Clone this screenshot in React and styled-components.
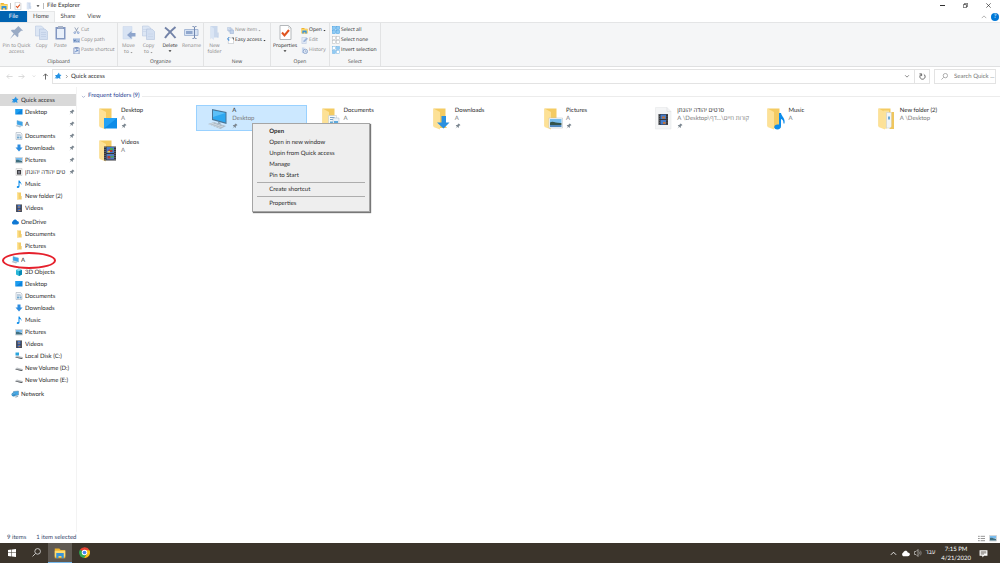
import React from 'react';
import styled, { createGlobalStyle, css } from 'styled-components';

const GlobalStyle = createGlobalStyle`
  * {
    box-sizing: border-box;
  }
  body {
    margin: 0;
    background-color: #fff;
    color: #2b2b2b;
    font-family: Lato, "Open Sans", "Noto Sans", "Liberation Sans", sans-serif;
    font-size: 6px;
    line-height: 8px;
    text-rendering: geometricPrecision;
  }
  button, input {
    margin: 0;
    padding: 0;
    border: 0;
    background: none;
    color: inherit;
    font: inherit;
    text-rendering: inherit;
  }
  a {
    color: inherit;
    text-decoration: none;
  }
  ul {
    margin: 0;
    padding: 0;
    list-style: none;
  }
  svg {
    display: block;
    flex: none;
  }
`;

const Window = styled.div`
  display: flex;
  flex-direction: column;
  min-height: 100vh;
`;

/* ---------- title bar and tabs ---------- */

const TitleBar = styled.header`
  display: flex;
  align-items: center;
  height: 11px;
`;

const QuickTools = styled.div`
  display: flex;
  align-items: center;
  gap: 2px;
`;

const Splitter = styled.span`
  width: 1px;
  height: 6px;
  background-color: #bbb;
`;

const Title = styled.h1`
  margin: 0 0 0 3px;
  padding-top: 1px;
  font-size: 6px;
  font-weight: 400;
  line-height: 8px;
`;

const WindowButtons = styled.div`
  display: flex;
  margin-left: auto;
`;

const WindowButton = styled.button`
  display: flex;
  align-items: center;
  justify-content: center;
  width: 23px;
  height: 11px;
`;

const Tabs = styled.nav`
  display: flex;
  align-items: stretch;
  height: 11px;
`;

const Tab = styled.button`
  width: 26px;
  padding-top: 1px;
  color: #444;

  ${(props) => props.$kind === 'file' && css`
    width: 27px;
    background-color: #0063b1;
    color: #fff;
  `}
  ${(props) => props.$kind === 'active' && css`
    width: 28px;
    padding-top: 0;
    border: 1px solid #e6e7e8;
    border-bottom: 0;
    background-color: #f5f6f7;
  `}
`;

const TabTools = styled.div`
  display: flex;
  align-items: center;
  gap: 4px;
  margin-left: auto;
  padding-right: 1px;
`;

const Help = styled.button`
  width: 8px;
  height: 8px;
  border-radius: 50%;
  background-color: #0078d7;
  color: #fff;
`;

/* ---------- ribbon ---------- */

const Ribbon = styled.section`
  display: flex;
  height: 45px;
  border-top: 1px solid #e4e5e6;
  border-bottom: 1px solid #dfe0e1;
  background-color: #f5f6f7;
  font-family: "Open Sans", "Noto Sans", sans-serif;
  font-size: 5px;
`;

const Group = styled.div`
  display: flex;
  flex-direction: column;
  justify-content: space-between;
  width: ${(props) => props.$width}px;
  padding-top: 2px;
  border-right: 1px solid #e2e3e4;
`;

const GroupBody = styled.div`
  display: flex;
  align-items: flex-start;
`;

const GroupName = styled.div`
  color: #444;
  line-height: 7px;
  text-align: center;
`;

const BigButton = styled.button`
  display: flex;
  flex: none;
  flex-direction: column;
  align-items: center;
  gap: 3px;
  width: ${(props) => props.$width}px;
  color: ${(props) => (props.$on ? '#222' : '#858585')};
  line-height: 6px;
  white-space: nowrap;
`;

const ButtonName = styled.span`
  display: flex;
  flex-direction: column;
  align-items: center;
`;

const WithCaret = styled.span`
  display: flex;
  align-items: center;
  gap: 1px;
`;

const SmallButtons = styled.div`
  display: flex;
  flex-direction: column;
  margin-left: 2px;
`;

const SmallButton = styled.button`
  display: flex;
  align-items: center;
  gap: 1px;
  height: 10px;
  color: ${(props) => (props.$on ? '#222' : '#858585')};
  white-space: nowrap;
`;

/* ---------- address row ---------- */

const AddressRow = styled.div`
  display: flex;
  align-items: center;
  height: 20px;
  padding: 0 4px 2px 0;
`;

const Arrows = styled.div`
  display: flex;
  align-items: center;
  justify-content: space-between;
  width: 52px;
  padding: 0 3px 0 6px;
`;

const IconButton = styled.button`
  display: flex;
  align-items: center;
  justify-content: center;
  min-width: ${(props) => props.$width || 6}px;
`;

const AddressBox = styled.div`
  display: flex;
  flex: 1;
  align-items: center;
  gap: 2px;
  height: 15px;
  padding-left: 1px;
  border: 1px solid #e3e3e3;
`;

const AddressName = styled.span`
  padding-top: 1px;
`;

const AddressEnd = styled.div`
  display: flex;
  align-self: stretch;
  margin-left: auto;
`;

const Refresh = styled(IconButton)`
  border-left: 1px solid #e3e3e3;
`;

const SearchBox = styled.label`
  display: flex;
  align-items: center;
  gap: 6px;
  width: 62px;
  height: 15px;
  margin-left: 4px;
  padding-left: 6px;
  border: 1px solid #e3e3e3;
`;

const SearchInput = styled.input`
  flex: 1;
  min-width: 0;
  padding-top: 1px;
  outline: none;

  &::placeholder {
    color: #777;
    opacity: 1;
  }
`;

/* ---------- body ---------- */

const Body = styled.div`
  display: flex;
  flex: 1;
`;

const Sidebar = styled.nav`
  display: flex;
  flex-direction: column;
  gap: 2px;
  width: 77px;
  padding-top: 7px;
  border-right: 1px solid #f3f3f3;
`;

const NavRow = styled.a`
  position: relative;
  display: flex;
  align-items: center;
  gap: 2px;
  height: 12px;
  padding: 0 1px 0 ${(props) => (props.$root ? 11 : 15)}px;
  background-color: ${(props) => (props.$selected ? '#d9d9d9' : 'transparent')};
`;

const NavName = styled.span`
  flex: 1;
  min-width: 0;
  padding-top: 1px;
  overflow: hidden;
  white-space: nowrap;
`;

const RedCircle = styled.span`
  position: absolute;
  top: -2px;
  left: 2px;
  width: 54px;
  height: 17px;
  border: 2px solid #e5202c;
  border-radius: 50%;
  z-index: 1;
`;

const Main = styled.main`
  flex: 1;
  min-width: 0;
  padding: 4px 0 0 4px;
`;

const SectionTitle = styled.h2`
  display: flex;
  align-items: center;
  gap: 2px;
  margin: 0;
  padding-top: 1px;
  color: #2a3f93;
  font-size: 6px;
  font-weight: 400;
  line-height: 8px;

  &::after {
    content: '';
    flex: 1;
    height: 1px;
    background-color: #ececec;
  }
`;

const Tiles = styled.ul`
  display: grid;
  grid-template-columns: repeat(8, 1fr);
  gap: 6px 1px;
  padding: 5px 26px 0 4px;
`;

const Tile = styled.li`
  position: relative;
  display: flex;
  gap: 2px;
  height: 26px;
  padding-left: 11px;
  border: 1px solid ${(props) => (props.$selected ? '#99d1ff' : 'transparent')};
  background-color: ${(props) => (props.$selected ? '#cce8ff' : 'transparent')};
`;

const TileText = styled.div`
  display: flex;
  flex-direction: column;
  min-width: 0;
  padding-top: 1px;
  white-space: nowrap;
`;

const TilePath = styled.span`
  color: #7b7b7b;
`;

const Menu = styled.div`
  position: absolute;
  top: 17px;
  left: 55px;
  display: flex;
  flex-direction: column;
  width: 118px;
  padding: 2px 1px;
  border: 1px solid #a5a5a5;
  background-color: #eee;
  box-shadow: 1px 1px 1px #777;
  z-index: 2;
`;

const MenuItem = styled.button`
  height: 11px;
  padding-left: 15px;
  font-weight: ${(props) => (props.$bold ? 700 : 400)};
  text-align: left;
`;

const MenuLine = styled.hr`
  width: 108px;
  height: 1px;
  margin: 1px auto;
  border: 0;
  background-color: #adadad;
`;

/* ---------- status bar and taskbar ---------- */

const StatusBar = styled.footer`
  display: flex;
  align-items: center;
  gap: 10px;
  height: 11px;
  padding: 1px 3px 0 7px;
  color: #34476b;
`;

const Views = styled.div`
  display: flex;
  gap: 4px;
  margin-left: auto;
`;

const Taskbar = styled.footer`
  display: flex;
  align-items: stretch;
  height: 20px;
  background-color: #3b342b;
  color: #fff;
`;

const TaskButton = styled.button`
  display: flex;
  align-items: center;
  justify-content: center;
  width: 24px;
  border-bottom: 1px solid ${(props) => (props.$active ? '#76b9ed' : 'transparent')};
  background-color: ${(props) => (props.$active ? '#605a53' : 'transparent')};
`;

const Tray = styled.div`
  display: flex;
  align-items: center;
  gap: 4px;
  margin-left: auto;
  padding-right: 12px;
`;

const Clock = styled.time`
  margin: 0 4px 0 2px;
  padding-top: 1px;
  line-height: 9px;
  text-align: center;
`;

/* ---------- icons ---------- */

const Svg = ({ w = 8, h, box = '0 0 16 16', children }) => (
  <svg width={w} height={h || w} viewBox={box} fill="none" aria-hidden="true">{children}</svg>
);

const Chevron = ({ dir = 'down', color = '#666', w = 6 }) => {
  const paths = {
    down: 'M3 6l5 5 5-5',
    up: 'M2 11l6-6 6 6',
    right: 'M6 3l5 5-5 5',
  };
  return <Svg w={w}><path d={paths[dir]} stroke={color} strokeWidth="2" /></Svg>;
};

const Caret = ({ color = '#333', w = 4 }) => (
  <Svg w={w}><path d="M2 5h12l-6 7z" fill={color} /></Svg>
);

const Arrow = ({ dir, color }) => {
  const paths = {
    left: 'M15 8H2M7 3L2 8l5 5',
    right: 'M1 8h13M9 3l5 5-5 5',
    up: 'M8 15V2M3 7l5-5 5 5',
  };
  return <Svg w={7}><path d={paths[dir]} stroke={color} strokeWidth="2" /></Svg>;
};

const Pin = ({ w = 6, color = '#7c8791' }) => (
  <Svg w={w}>
    <path d="M10 1l5 5-2 0-3 3 0 3-1 1-3-3-5 5 4-6-3-3 1-1h3l3-3z" fill={color} />
  </Svg>
);

// the filled pin that marks Quick access
const Star = ({ w = 8 }) => (
  <Svg w={w}>
    <path d="M10 1l1 4 4 1-3 3 1 5-4-2-4 2 0-3-4 3 3-5-2-3 4 0z" fill="#2492e4" />
  </Svg>
);

const PagePair = ({ w = 15, arrow }) => (
  <Svg w={w} box="0 0 30 30">
    <path d="M3 2h12l4 4v16H3z" fill="#dce6f4" stroke="#b1c0dc" />
    <path d="M11 8h11l5 5v16H11z" fill="#d3dff1" stroke="#a9bad9" />
    {arrow
      ? <path d="M4 9h10M4 13h6M14 18h10M14 23h10" stroke="#c0cee5" />
      : <path d="M14 15h10M14 19h10M14 23h10" stroke="#b4c4df" />}
  </Svg>
);

const PasteIcon = () => (
  <Svg w={15} box="0 0 30 30">
    <path d="M5 4h20v25H5z" fill="#8297c1" />
    <path d="M8 8h14v18H8z" fill="#e9f0fa" />
    <path d="M10 2h10v5H10z" fill="#a8b3c8" />
  </Svg>
);

const CutIcon = () => (
  <Svg w={7}>
    <path d="M4 1l6 10M12 1L6 11" stroke="#8d9bb4" strokeWidth="2" />
    <circle cx="4" cy="13" r="2" stroke="#7f9ccb" strokeWidth="2" />
    <circle cx="12" cy="13" r="2" stroke="#7f9ccb" strokeWidth="2" />
  </Svg>
);

const CopyPathIcon = () => (
  <Svg w={7}>
    <path d="M0 3h16v10H0z" fill="#a9bfdf" />
    <path d="M2 6l2 4 2-4M8 10h1M11 10h2" stroke="#4d6fa8" strokeWidth="2" />
  </Svg>
);

const PasteShortcutIcon = () => (
  <Svg w={7}>
    <path d="M2 2h12v14H2z" fill="#e7eef8" stroke="#8297c1" strokeWidth="2" />
    <path d="M5 0h6v4H5z" fill="#8297c1" />
    <path d="M5 12c0-3 2-4 6-4M8 5l3 3-3 3" stroke="#5b80bd" strokeWidth="2" />
  </Svg>
);

const MoveIcon = () => (
  <Svg w={15} box="0 0 30 30">
    <path d="M4 3h18v25H4z" fill="#d8e3f3" stroke="#c6d4e9" />
    <path d="M29 16v7h-8v5l-9-8 9-8v4z" fill="#8ea5cc" />
  </Svg>
);

const DeleteIcon = () => (
  <Svg w={15} box="0 0 30 30">
    <path d="M4 5c7 5 14 12 21 21M25 4C18 10 10 17 4 26" stroke="#7383a8" strokeWidth="4" />
  </Svg>
);

const RenameIcon = () => (
  <Svg w={15} box="0 0 30 30">
    <path d="M1 9h27v12H1z" fill="#d7e3f4" stroke="#a8bad7" strokeWidth="2" />
    <path d="M4 12h13v6H4z" fill="#90a7cd" />
    <path d="M17 3c3 0 4 0 4 3v18c0 3-1 3-4 3M25 3c-3 0-4 0-4 3M21 24c0 3 1 3 4 3" stroke="#7187b0" strokeWidth="2" />
  </Svg>
);

const NewFolderIcon = ({ w = 15 }) => (
  <Svg w={w} box="0 0 30 30">
    <path d="M7 2h14v20l2 3H9l-2 4z" fill="#cad8ec" />
    <path d="M7 2l7 5v23l-7-5z" fill="#dae5f4" />
    <path d="M21 15h2v10h-2z" fill="#b8cae5" />
  </Svg>
);

const NewItemIcon = () => (
  <Svg w={7}>
    <path d="M1 1h8v7H1zM4 4h8v7H4z" fill="#dce6f4" stroke="#9fb3d4" />
    <path d="M7 7h8v8H7z" fill="#c2d2ea" stroke="#8aa3cc" />
  </Svg>
);

const EasyAccessIcon = () => (
  <Svg w={7}>
    <path d="M5 2h10v13H3V8" fill="#fff" stroke="#a2a8ae" />
    <path d="M5 0L1 5h3v4" stroke="#2d7ed0" strokeWidth="2" />
    <path d="M12 2h3v4" stroke="#555" strokeWidth="2" />
  </Svg>
);

const CheckPage = ({ w = 15 }) => (
  <Svg w={w} box="0 0 30 30">
    <path d="M4 1h17l5 5v23H4z" fill="#fff" stroke="#b4b8bb" strokeWidth="2" />
    <path d="M21 1v5h5" stroke="#b4b8bb" />
    <path d="M8 15l5 6 9-11" stroke="#e0541f" strokeWidth="4" />
  </Svg>
);

const ExplorerIcon = ({ w = 8 }) => (
  <Svg w={w}>
    <path d="M1 2h6l2 2h6v11H1z" fill="#f0b42f" />
    <path d="M1 5h14v8H1z" fill="#ffdc70" />
    <path d="M3 8h10v7h-3v-3H6v3H3z" fill="#3a94d8" />
  </Svg>
);

const EditIcon = () => (
  <Svg w={7}>
    <path d="M2 1h10v14H2z" fill="#e3ebf7" stroke="#a9bad9" />
    <path d="M5 12l1-4 7-7 3 3-7 7z" fill="#9db4da" />
  </Svg>
);

const HistoryIcon = () => (
  <Svg w={7}>
    <path d="M2 1h6v13H2z" fill="#c8d7ed" />
    <circle cx="10" cy="10" r="5" fill="#e3ebf7" stroke="#8aa3cc" strokeWidth="2" />
    <path d="M10 7v4h3" stroke="#6e89b8" />
  </Svg>
);

const Squares = ({ fills, stroke }) => (
  <Svg w={8}>
    <rect x="1" y="1" width="6" height="6" fill={fills[0]} stroke={stroke} />
    <rect x="9" y="1" width="6" height="6" fill={fills[1]} stroke={stroke} />
    <rect x="1" y="9" width="6" height="6" fill={fills[2]} stroke={stroke} />
    <rect x="9" y="9" width="6" height="6" fill={fills[3]} stroke={stroke} />
  </Svg>
);

const SearchIcon = ({ color = '#888', w = 7 }) => (
  <Svg w={w}>
    <circle cx="10" cy="6" r="5" stroke={color} strokeWidth="1.5" />
    <path d="M6 10l-5 5" stroke={color} strokeWidth="1.5" />
  </Svg>
);

const DesktopIcon = () => (
  <Svg><path d="M1 2h14v11H1z" fill="#0b84de" /><path d="M1 2h14L1 13z" fill="#1c9df0" /></Svg>
);

const PcIcon = () => (
  <Svg>
    <path d="M4 1l11 3v8L4 9z" fill="#3ba4ea" stroke="#7fb4d6" />
    <path d="M1 12l3-2 9 3-3 2z" fill="#b4c0ca" />
  </Svg>
);

const DocIcon = () => (
  <Svg>
    <path d="M2 1h9l3 3v11H2z" fill="#f2f6fa" stroke="#98a4b0" />
    <path d="M4 5h7M4 7h8" stroke="#8aa7c3" />
    <path d="M4 9h4v4H4zM9 9h4v4H9z" fill="#70a8d0" />
  </Svg>
);

const DownIcon = () => (
  <Svg><path d="M5 1h6v6h4l-7 8-7-8h4z" fill="#2d8de0" /></Svg>
);

const PicIcon = () => (
  <Svg>
    <path d="M1 3h14v11H1z" fill="#fff" stroke="#a6adb3" />
    <path d="M2 4h12v5H2z" fill="#79bdf0" />
    <path d="M2 8c4-1 7 1 12 2v3H2z" fill="#3f6f80" />
  </Svg>
);

const FilmIcon = () => (
  <Svg>
    <path d="M2 1h12v15H2z" fill="#3b3b41" />
    <path d="M3 1v15M13 1v15" stroke="#9d9da3" strokeDasharray="1 1" />
    <path d="M5 2h6v6H5z" fill="#3d78d3" />
    <path d="M5 9h6v6H5z" fill="#456fbd" />
    <path d="M6 5h4v2H6zM7 12h4v2H7z" fill="#bd7a3c" />
  </Svg>
);

const FilmPageIcon = () => (
  <Svg>
    <path d="M2 1h12v14H2z" fill="#f3f3f3" stroke="#bcbcbc" />
    <path d="M4 4h8v9H4z" fill="#404044" />
    <path d="M6 6h4v5H6z" fill="#7b7d88" />
  </Svg>
);

const MusicIcon = () => (
  <Svg>
    <path d="M7 1h2c1 3 4 4 4 8h-1c0-2-1-3-3-3v6c0 2-1 4-3 4-4 0-3-5 1-4z" fill="#0b8bea" />
  </Svg>
);

const SmallFolder = () => (
  <Svg>
    <path d="M4 1h8v14H4z" fill="#f2cd68" />
    <path d="M4 1l3 2v13l-3-2z" fill="#ffe394" />
    <path d="M12 8h1v7h-1z" fill="#e4b94b" />
  </Svg>
);

const CloudIcon = ({ color = '#0f78d4', w = 9 }) => (
  <Svg w={w}><path d="M4 13a4 4 0 010-7c2-4 7-4 8 0 5 0 5 7 0 7z" fill={color} /></Svg>
);

const CubeIcon = () => (
  <Svg>
    <path d="M2 4l6-3 6 3v9l-6 3-6-3z" fill="#28b5d6" />
    <path d="M2 4l6 2 6-2-6-3z" fill="#94e3f0" />
    <path d="M8 6l6-2v9l-6 3z" fill="#0789b5" />
  </Svg>
);

const DiskIcon = ({ system }) => (
  <Svg>
    <path d="M1 9l3-2 11 3v3l-2 1L1 11z" fill="#c2c6ca" />
    <path d="M1 10l12 2 2-1v2l-2 1-12-3z" fill="#4f5356" />
    {system && <path d="M1 1h7v6H1z" fill="#2ba5dd" />}
  </Svg>
);

const NetworkIcon = () => (
  <Svg>
    <path d="M5 3l10-1v8l-10 2z" fill="#43a7e6" stroke="#5b86a5" />
    <circle cx="5" cy="9" r="4" fill="#368fc8" />
    <path d="M2 9c2-2 4-1 6-2" stroke="#a2d7f2" />
    <path d="M7 14l6-2 2 1-5 2z" fill="#8799a6" />
  </Svg>
);

// overlays that sit on the front of a large folder, in a 44x50 box
const badges = {
  desktop: (
    <>
      <path d="M14 24h26v21H14z" fill="#0d8ce8" />
      <path d="M14 24h26L14 45z" fill="#23a2f5" />
    </>
  ),
  documents: (
    <>
      <path d="M17 19h16v20H17z" fill="#f5f8fa" stroke="#b9c4cd" />
      <path d="M20 23h9M20 27h10" stroke="#7ba4c7" strokeWidth="2" />
      <path d="M20 31h7v6h-7z" fill="#5faad9" />
      <path d="M26 24h12v17H26z" fill="#edf4fa" stroke="#a9b9c7" />
      <path d="M28 30h8v6h-8z" fill="#5da9dd" />
    </>
  ),
  downloads: <path d="M21 20h9v13h7L25 45 12 33h9z" fill="#2b90df" />,
  pictures: (
    <>
      <path d="M14 24h27v20H14z" fill="#f5fafd" stroke="#b4bcc3" />
      <path d="M16 26h23v8H16z" fill="#79bdeb" />
      <path d="M16 33c6-4 12 2 23 1v4H16z" fill="#34544b" />
      <path d="M16 38h23v4H16z" fill="#5188bd" />
    </>
  ),
  music: <path d="M28 14h4c1 7 9 10 7 21h-2c0-6-2-8-5-9v14c0 4-3 7-7 7-9 0-8-10 0-10h3z" fill="#0b8cec" />,
  files: (
    <>
      <path d="M15 9h11v32l-6 5-5-3z" fill="#fbe29a" />
      <path d="M21 13h10v31H21z" fill="#f1f5f8" stroke="#c2c9cf" />
      <path d="M24 21h4v6h-4z" fill="#6aa8d8" />
      <path d="M31 12h5v34H26l5-5z" fill="#efc65e" />
    </>
  ),
  videos: (
    <>
      <path d="M14 17h24v28H14z" fill="#34353a" />
      <path d="M16 18v26M36 18v26" stroke="#85878c" strokeWidth="2" strokeDasharray="2 2" />
      <path d="M19 18h15v12H19z" fill="#4379c9" />
      <path d="M19 32h15v11H19z" fill="#527cc0" />
      <path d="M23 23h8v5h-8zM21 36h6v5h-6z" fill="#b13e36" />
      <path d="M26 20h6v4h-6zM27 36h6v3h-6z" fill="#48a55a" />
      <path d="M21 26h5v3h-5z" fill="#ecc44b" />
    </>
  ),
};

const BigFolder = ({ badge }) => (
  <Svg w={22} h={25} box="0 0 44 50">
    <path d="M5 5h24v35l3 4H14l-9-4z" fill="#f4cb62" />
    <path d="M5 5l13 7v35L5 42z" fill="#fde196" />
    {badges[badge]}
  </Svg>
);

const BigPc = () => (
  <Svg w={22} h={25} box="0 0 44 50">
    <path d="M8 6l29 6v24L8 28z" fill="#4b7596" />
    <path d="M10 9l25 5v19L10 26z" fill="#2ea8f0" />
    <path d="M10 9l25 5L10 22z" fill="#5cc0f8" />
    <path d="M20 32l5 1v5h-5z" fill="#8da3b3" />
    <path d="M0 36l12-4 24 8-11 6z" fill="#aebcc8" />
    <path d="M3 37l9-3M8 39l10-3M14 41l10-3M20 43l10-3" stroke="#eef2f5" />
  </Svg>
);

const BigFilmPage = () => (
  <Svg w={22} h={25} box="0 0 44 50">
    <path d="M5 3h23l8 8v35H5z" fill="#f4f5f6" stroke="#e3e5e7" />
    <path d="M28 3v8h8" stroke="#d5d7d9" />
    <path d="M11 16h19v22H11z" fill="#35363b" />
    <path d="M13 16v22M28 16v22" stroke="#77797e" strokeDasharray="2 2" />
    <path d="M15 17h11v9H15zM15 28h11v9H15z" fill="#457bc8" />
    <path d="M18 21h6v4h-6zM20 32h5v4h-5z" fill="#c0743c" />
  </Svg>
);

const ChromeIcon = () => (
  <Svg w={11} box="0 0 24 24">
    <path d="M12 12L2 6a12 12 0 0121 1z" fill="#e84335" />
    <path d="M12 12L2 6a12 12 0 009 18l6-9z" fill="#31a952" />
    <path d="M12 12V7h11a12 12 0 01-12 17l6-9z" fill="#fbc116" />
    <circle cx="12" cy="12" r="6" fill="#fff" />
    <circle cx="12" cy="12" r="4" fill="#4285f4" />
  </Svg>
);

/* ---------- data ---------- */

const nav = [
  [
    { name: 'Quick access', icon: <Star />, root: true, selected: true },
    { name: 'Desktop', icon: <DesktopIcon />, pinned: true },
    { name: 'A', icon: <PcIcon />, pinned: true },
    { name: 'Documents', icon: <DocIcon />, pinned: true },
    { name: 'Downloads', icon: <DownIcon />, pinned: true },
    { name: 'Pictures', icon: <PicIcon />, pinned: true },
    { name: 'טים יהודה יהונתן', icon: <FilmPageIcon />, pinned: true },
    { name: 'Music', icon: <MusicIcon /> },
    { name: 'New folder (2)', icon: <SmallFolder /> },
    { name: 'Videos', icon: <FilmIcon /> },
  ],
  [
    { name: 'OneDrive', icon: <CloudIcon w={8} />, root: true },
    { name: 'Documents', icon: <SmallFolder /> },
    { name: 'Pictures', icon: <SmallFolder /> },
  ],
  [
    { name: 'A', icon: <PcIcon />, root: true, circled: true },
    { name: '3D Objects', icon: <CubeIcon /> },
    { name: 'Desktop', icon: <DesktopIcon /> },
    { name: 'Documents', icon: <DocIcon /> },
    { name: 'Downloads', icon: <DownIcon /> },
    { name: 'Music', icon: <MusicIcon /> },
    { name: 'Pictures', icon: <PicIcon /> },
    { name: 'Videos', icon: <FilmIcon /> },
    { name: 'Local Disk (C:)', icon: <DiskIcon system /> },
    { name: 'New Volume (D:)', icon: <DiskIcon /> },
    { name: 'New Volume (E:)', icon: <DiskIcon /> },
  ],
  [
    { name: 'Network', icon: <NetworkIcon />, root: true },
  ],
];

const folders = [
  { name: 'Desktop', path: 'A', icon: <BigFolder badge="desktop" />, pinned: true },
  { name: 'A', path: 'Desktop', icon: <BigPc />, pinned: true, selected: true },
  { name: 'Documents', path: 'A', icon: <BigFolder badge="documents" />, pinned: true },
  { name: 'Downloads', path: 'A', icon: <BigFolder badge="downloads" />, pinned: true },
  { name: 'Pictures', path: 'A', icon: <BigFolder badge="pictures" />, pinned: true },
  { name: 'סרטים יהודה יהונתן', path: 'A \\Desktop\\קורות חיים\\...דף', icon: <BigFilmPage />, pinned: true },
  { name: 'Music', path: 'A', icon: <BigFolder badge="music" /> },
  { name: 'New folder (2)', path: 'A \\Desktop', icon: <BigFolder badge="files" /> },
  { name: 'Videos', path: 'A', icon: <BigFolder badge="videos" /> },
];

/* ---------- parts ---------- */

const ContextMenu = () => (
  <Menu role="menu">
    <MenuItem role="menuitem" $bold>Open</MenuItem>
    <MenuItem role="menuitem">Open in new window</MenuItem>
    <MenuItem role="menuitem">Unpin from Quick access</MenuItem>
    <MenuItem role="menuitem">Manage</MenuItem>
    <MenuItem role="menuitem">Pin to Start</MenuItem>
    <MenuLine />
    <MenuItem role="menuitem">Create shortcut</MenuItem>
    <MenuLine />
    <MenuItem role="menuitem">Properties</MenuItem>
  </Menu>
);

const RibbonBar = () => (
  <Ribbon>
    <Group $width={118}>
      <GroupBody>
        <BigButton $width={33}>
          <Pin w={15} color="#9aabc5" />
          <ButtonName><span>Pin to Quick</span><span>access</span></ButtonName>
        </BigButton>
        <BigButton $width={17}><PagePair />Copy</BigButton>
        <BigButton $width={21}><PasteIcon />Paste</BigButton>
        <SmallButtons>
          <SmallButton><CutIcon />Cut</SmallButton>
          <SmallButton><CopyPathIcon />Copy path</SmallButton>
          <SmallButton><PasteShortcutIcon />Paste shortcut</SmallButton>
        </SmallButtons>
      </GroupBody>
      <GroupName>Clipboard</GroupName>
    </Group>
    <Group $width={86}>
      <GroupBody>
        <BigButton $width={21}>
          <MoveIcon />
          <ButtonName><span>Move</span><WithCaret>to <Caret w={3} color="#999" /></WithCaret></ButtonName>
        </BigButton>
        <BigButton $width={19}>
          <PagePair arrow />
          <ButtonName><span>Copy</span><WithCaret>to <Caret w={3} color="#999" /></WithCaret></ButtonName>
        </BigButton>
        <BigButton $width={24} $on>
          <DeleteIcon />
          <ButtonName><span>Delete</span><Caret /></ButtonName>
        </BigButton>
        <BigButton $width={19}><RenameIcon />Rename</BigButton>
      </GroupBody>
      <GroupName>Organize</GroupName>
    </Group>
    <Group $width={67}>
      <GroupBody>
        <BigButton $width={21}>
          <NewFolderIcon />
          <ButtonName><span>New</span><span>folder</span></ButtonName>
        </BigButton>
        <SmallButtons>
          <SmallButton><NewItemIcon />New item <Caret w={3} color="#aaa" /></SmallButton>
          <SmallButton $on><EasyAccessIcon />Easy access <Caret w={3} /></SmallButton>
        </SmallButtons>
      </GroupBody>
      <GroupName>New</GroupName>
    </Group>
    <Group $width={59}>
      <GroupBody>
        <BigButton $width={28} $on>
          <CheckPage />
          <ButtonName><span>Properties</span><Caret /></ButtonName>
        </BigButton>
        <SmallButtons>
          <SmallButton $on><ExplorerIcon w={7} />Open <Caret w={3} /></SmallButton>
          <SmallButton><EditIcon />Edit</SmallButton>
          <SmallButton><HistoryIcon />History</SmallButton>
        </SmallButtons>
      </GroupBody>
      <GroupName>Open</GroupName>
    </Group>
    <Group $width={51}>
      <GroupBody>
        <SmallButtons>
          <SmallButton $on><Squares fills={['#8fcbf5', '#8fcbf5', '#8fcbf5', '#8fcbf5']} stroke="#3a9be2" />Select all</SmallButton>
          <SmallButton $on><Squares fills={['#fff', '#fff', '#fff', '#fff']} stroke="#b4b8bc" />Select none</SmallButton>
          <SmallButton $on><Squares fills={['#fff', '#8fcbf5', '#8fcbf5', '#fff']} stroke="#6fb2e4" />Invert selection</SmallButton>
        </SmallButtons>
      </GroupBody>
      <GroupName>Select</GroupName>
    </Group>
  </Ribbon>
);

const App = () => (
  <Window>
    <GlobalStyle />
    <TitleBar>
      <QuickTools>
        <ExplorerIcon />
        <Splitter />
        <IconButton $width={10} aria-label="Properties"><CheckPage w={8} /></IconButton>
        <IconButton $width={6} aria-label="New folder"><NewFolderIcon w={8} /></IconButton>
        <IconButton $width={6} aria-label="Customize"><Caret /></IconButton>
        <Splitter />
      </QuickTools>
      <Title>File Explorer</Title>
      <WindowButtons>
        <WindowButton aria-label="Minimize"><Svg w={5}><path d="M0 8h16" stroke="#222" strokeWidth="3" /></Svg></WindowButton>
        <WindowButton aria-label="Restore">
          <Svg w={5}><path d="M1 5h10v10H1zM5 5V1h10v10h-4" stroke="#222" strokeWidth="2" /></Svg>
        </WindowButton>
        <WindowButton aria-label="Close"><Svg w={5}><path d="M1 1l14 14M15 1L1 15" stroke="#222" strokeWidth="2" /></Svg></WindowButton>
      </WindowButtons>
    </TitleBar>
    <Tabs>
      <Tab $kind="file">File</Tab>
      <Tab $kind="active">Home</Tab>
      <Tab>Share</Tab>
      <Tab>View</Tab>
      <TabTools>
        <IconButton aria-label="Collapse ribbon"><Chevron dir="up" color="#999" /></IconButton>
        <Help aria-label="Help">?</Help>
      </TabTools>
    </Tabs>
    <RibbonBar />
    <AddressRow>
      <Arrows>
        <IconButton aria-label="Back"><Arrow dir="left" color="#d5d5d5" /></IconButton>
        <IconButton aria-label="Forward"><Arrow dir="right" color="#d5d5d5" /></IconButton>
        <IconButton aria-label="Recent"><Chevron color="#bbb" w={4} /></IconButton>
        <IconButton aria-label="Up"><Arrow dir="up" color="#555" /></IconButton>
      </Arrows>
      <AddressBox>
        <Star />
        <Chevron dir="right" w={5} />
        <AddressName>Quick access</AddressName>
        <AddressEnd>
          <IconButton $width={14} aria-label="Previous locations"><Chevron /></IconButton>
          <Refresh $width={15} aria-label="Refresh">
            <Svg w={7}>
              <path d="M5 3a6 6 0 106 0" stroke="#555" strokeWidth="2" />
              <path d="M1 2h5v5" stroke="#555" strokeWidth="2" />
            </Svg>
          </Refresh>
        </AddressEnd>
      </AddressBox>
      <SearchBox>
        <SearchIcon />
        <SearchInput type="text" placeholder="Search Quick ..." aria-label="Search Quick access" />
      </SearchBox>
    </AddressRow>
    <Body>
      <Sidebar>
        {nav.map((group, i) => (
          <ul key={i}>
            {group.map((item) => (
              <li key={item.name}>
                <NavRow href="#" $root={item.root} $selected={item.selected}>
                  {item.icon}
                  <NavName>{item.name}</NavName>
                  {item.pinned && <Pin />}
                  {item.circled && <RedCircle />}
                </NavRow>
              </li>
            ))}
          </ul>
        ))}
      </Sidebar>
      <Main>
        <SectionTitle><Chevron color="#8a93b8" w={5} />Frequent folders (9)</SectionTitle>
        <Tiles>
          {folders.map((folder) => (
            <Tile key={folder.name} $selected={folder.selected}>
              {folder.icon}
              <TileText>
                <span>{folder.name}</span>
                <TilePath>{folder.path}</TilePath>
                {folder.pinned && <Pin />}
              </TileText>
              {folder.selected && <ContextMenu />}
            </Tile>
          ))}
        </Tiles>
      </Main>
    </Body>
    <StatusBar>
      <span>9 items</span>
      <span>1 item selected</span>
      <Views>
        <IconButton aria-label="Details">
          <Svg w={7}><path d="M0 3h4M6 3h10M0 8h4M6 8h10M0 13h4M6 13h10" stroke="#888" strokeWidth="2" /></Svg>
        </IconButton>
        <IconButton aria-label="Large icons"><PicIcon /></IconButton>
      </Views>
    </StatusBar>
    <Taskbar>
      <TaskButton aria-label="Start">
        <Svg w={8}><path d="M0 2l7-1v6H0zM8 1l8-1v7H8zM0 8h7v7l-7-1zM8 8h8v8l-8-1z" fill="#fff" /></Svg>
      </TaskButton>
      <TaskButton aria-label="Search"><SearchIcon color="#ddd" w={9} /></TaskButton>
      <TaskButton aria-label="File Explorer" $active><ExplorerIcon w={12} /></TaskButton>
      <TaskButton aria-label="Chrome"><ChromeIcon /></TaskButton>
      <Tray>
        <Chevron dir="up" color="#fff" w={7} />
        <CloudIcon color="#fff" w={9} />
        <Svg w={8}>
          <path d="M1 5h3l4-4v14l-4-4H1z" stroke="#fff" />
          <path d="M10 5c2 2 2 4 0 6M12 3c3 3 3 7 0 10" stroke="#ccc" />
        </Svg>
        <span>עבר</span>
        <Clock>7:15 PM<br />4/21/2020</Clock>
        <Svg w={9}>
          <path d="M1 2h14v10H9l-3 3v-3H1z" fill="#fff" />
          <path d="M3 5h10M3 7h10M3 9h6" stroke="#3b342b" />
        </Svg>
      </Tray>
    </Taskbar>
  </Window>
);

export default App;
